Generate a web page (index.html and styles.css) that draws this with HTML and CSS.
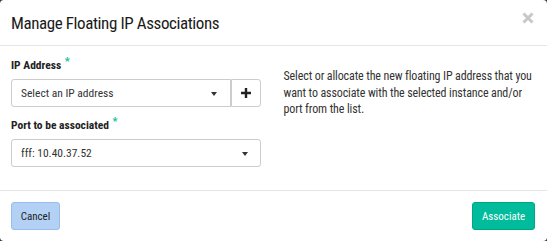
FILE: index.html
```html
<!DOCTYPE html>
<html lang="en">
<head>
    <meta charset="UTF-8">
    <title>Manage Floating IP Associations</title>
    <link rel="stylesheet" href="styles.css">
</head>
<body>
    <div class="modal">
        <div class="modal-header">
            <h3 class="modal-title">Manage Floating IP Associations</h3>
            <span class="close">
                <svg width="12" height="12" viewBox="0 0 12 12"><path d="M1.5 1.5 L10.5 10.5 M10.5 1.5 L1.5 10.5" stroke="#c8c8c8" stroke-width="3"/></svg>
            </span>
        </div>
        <div class="modal-body">
            <div class="left">
                <div class="form-group">
                    <label>IP Address <span class="req">*</span></label>
                    <div class="input-group">
                        <div class="select">
                            <span>Select an IP address</span>
                            <span class="caret"></span>
                        </div>
                        <div class="add-btn">
                            <svg width="10" height="10" viewBox="0 0 10 10"><path d="M5 0 V10 M0 5 H10" stroke="#222" stroke-width="2.4"/></svg>
                        </div>
                    </div>
                </div>
                <div class="form-group">
                    <label>Port to be associated <span class="req">*</span></label>
                    <div class="select full">
                        <span>fff: 10.40.37.52</span>
                        <span class="caret"></span>
                    </div>
                </div>
            </div>
            <div class="right">
                <p>Select or allocate the new floating IP address that you want to associate with the selected instance and/or port from the list.</p>
            </div>
        </div>
        <div class="modal-footer">
            <button class="btn btn-cancel">Cancel</button>
            <button class="btn btn-primary">Associate</button>
        </div>
    </div>
</body>
</html>
```

FILE: styles.css
```css
body {
    margin: 0;
    background-color: #24413c;
    font-family: "Roboto Condensed", "DejaVu Sans Condensed", "DejaVu Sans", sans-serif;
    color: #333;
}
.modal {
    width: 547px;
    height: 241px;
    background-color: white;
    border-radius: 4px;
    overflow: hidden;
}
.modal-header {
    height: 46px;
    border-bottom: 1px solid #e5e5e5;
    display: flex;
    align-items: center;
    justify-content: space-between;
    padding: 0 13px 0 11px;
    box-sizing: border-box;
}
.modal-title {
    margin: 0 0 -1px 0;
    font-size: 17px;
    font-weight: normal;
    color: #1a1a1a;
    letter-spacing: -0.4px;
}
.close {
    display: flex;
    margin-top: -9px;
}
.modal-body {
    height: 133px;
    padding: 11px 11px 0 11px;
    display: flex;
    gap: 23px;
}
.left {
    width: 250px;
}
.form-group {
    margin-bottom: 10px;
}
label {
    display: block;
    font-size: 11.5px;
    font-weight: bold;
    line-height: 17px;
    margin-bottom: 5px;
    color: #222;
}
.req {
    color: #1bbc9b;
    font-size: 11px;
    position: relative;
    top: -4px;
    margin-left: 1px;
}
.input-group {
    display: flex;
    height: 28px;
}
.select {
    flex: 1;
    height: 26px;
    border: 1px solid #ccc;
    border-radius: 3px 0 0 3px;
    display: flex;
    align-items: center;
    justify-content: space-between;
    padding: 0 13px 0 9px;
    font-size: 11.5px;
    color: #333;
}
.select.full {
    border-radius: 3px;
    flex: none;
    padding-right: 12px;
}
.caret {
    width: 0;
    height: 0;
    border-left: 3.5px solid transparent;
    border-right: 3.5px solid transparent;
    border-top: 4px solid #333;
    margin-top: 1px;
}
.add-btn {
    width: 28px;
    height: 26px;
    border: 1px solid #ccc;
    border-radius: 0 3px 3px 0;
    display: flex;
    align-items: center;
    justify-content: center;
}
.right {
    width: 253px;
}
.right p {
    margin: 11px 0 0 0;
    font-size: 12px;
    line-height: 16.5px;
    letter-spacing: -0.12px;
    color: #333;
}
.modal-footer {
    border-top: 1px solid #e5e5e5;
    padding: 11px 12px 11px 11px;
    display: flex;
    justify-content: space-between;
}
.btn {
    height: 28px;
    border-radius: 3px;
    font-family: "Roboto Condensed", "DejaVu Sans Condensed", "DejaVu Sans", sans-serif;
    font-size: 11px;
    padding: 0;
}
.btn-cancel {
    width: 49px;
    background-color: #b3d0f5;
    border: 1px solid #97bdee;
    color: #222;
}
.btn-primary {
    width: 63px;
    background-color: #00bc9c;
    border: 1px solid #00a487;
    color: white;
}
```
